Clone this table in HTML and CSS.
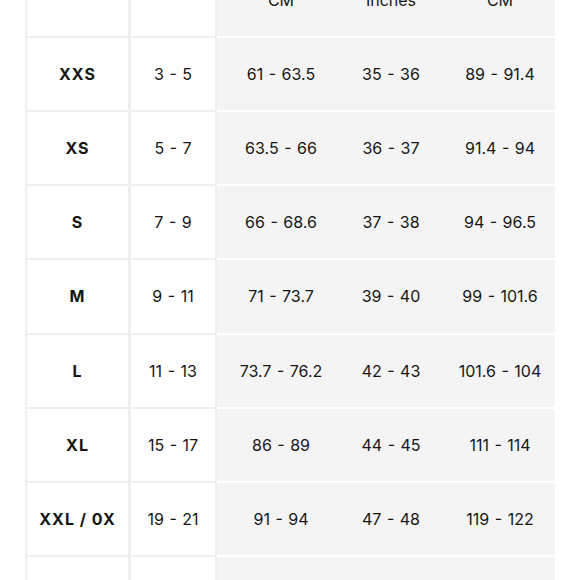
FILE: index.html
```html
<!DOCTYPE html>
<html lang="en">
<head>
<meta charset="utf-8">
<title>Size Chart</title>
<link rel="stylesheet" href="styles.css">
</head>
<body>
<div class="viewport">
  <div class="chart">
    <div class="cell w first head">Size</div>
    <div class="cell w head">US</div>
    <div class="cell g head c3">Length<br>CM</div>
    <div class="cell g head">Bust<br>Inches</div>
    <div class="cell g head">Bust<br>CM</div>

    <div class="cell w first size">XXS</div>
    <div class="cell w">3 - 5</div>
    <div class="cell g c3">61 - 63.5</div>
    <div class="cell g">35 - 36</div>
    <div class="cell g">89 - 91.4</div>

    <div class="cell w first size">XS</div>
    <div class="cell w">5 - 7</div>
    <div class="cell g c3">63.5 - 66</div>
    <div class="cell g">36 - 37</div>
    <div class="cell g">91.4 - 94</div>

    <div class="cell w first size">S</div>
    <div class="cell w">7 - 9</div>
    <div class="cell g c3">66 - 68.6</div>
    <div class="cell g">37 - 38</div>
    <div class="cell g">94 - 96.5</div>

    <div class="cell w first size">M</div>
    <div class="cell w">9 - 11</div>
    <div class="cell g c3">71 - 73.7</div>
    <div class="cell g">39 - 40</div>
    <div class="cell g">99 - 101.6</div>

    <div class="cell w first size">L</div>
    <div class="cell w">11 - 13</div>
    <div class="cell g c3">73.7 - 76.2</div>
    <div class="cell g">42 - 43</div>
    <div class="cell g">101.6 - 104</div>

    <div class="cell w first size">XL</div>
    <div class="cell w">15 - 17</div>
    <div class="cell g c3">86 - 89</div>
    <div class="cell g">44 - 45</div>
    <div class="cell g">111 - 114</div>

    <div class="cell w first size">XXL / 0X</div>
    <div class="cell w">19 - 21</div>
    <div class="cell g c3">91 - 94</div>
    <div class="cell g">47 - 48</div>
    <div class="cell g">119 - 122</div>

    <div class="cell w first size"></div>
    <div class="cell w"></div>
    <div class="cell g c3"></div>
    <div class="cell g"></div>
    <div class="cell g"></div>
  </div>
</div>
</body>
</html>
```

FILE: styles.css
```css
html, body {
  margin: 0;
  padding: 0;
  background: #ffffff;
}

.viewport {
  width: 580px;
  height: 580px;
  overflow: hidden;
}

.chart {
  display: grid;
  grid-template-columns: 106px 86px 120px 108px 110px;
  grid-template-rows: 94px repeat(8, 74.15px);
  margin: -56px 0 0 25px;
  width: 530px;
  font-family: "Inter", "Liberation Sans", sans-serif;
  font-size: 16px;
  color: #161616;
}

.cell {
  box-sizing: border-box;
  display: flex;
  align-items: center;
  justify-content: center;
  text-align: center;
  line-height: 20px;
  word-spacing: 1px;
}

.w {
  background: #ffffff;
  border-bottom: 2px solid #efefef;
  border-right: 3px solid #efefef;
}

.w + .w {
  border-right-width: 2px;
}

.first {
  border-left: 2px solid #efefef;
}

.g {
  background: #f4f4f4;
  border-bottom: 2px solid #ffffff;
}

.c3 {
  padding-left: 8px;
}

.size {
  font-weight: 700;
  letter-spacing: 1px;
  word-spacing: 0;
}
```
